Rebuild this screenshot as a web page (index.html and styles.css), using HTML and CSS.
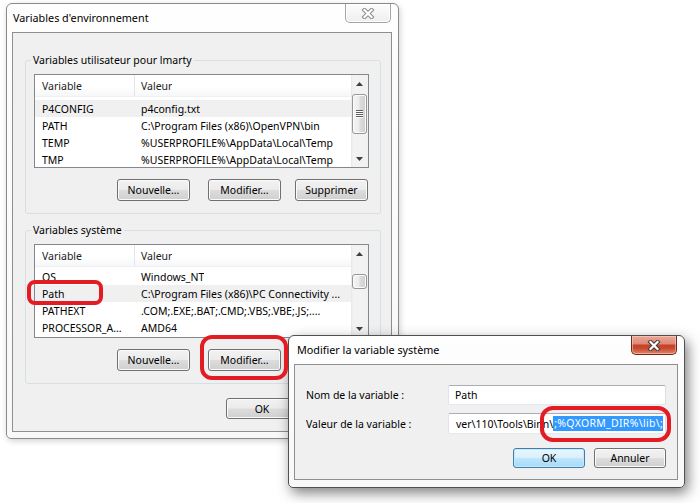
FILE: index.html
```html
<!DOCTYPE html>
<html lang="fr">
<head>
<meta charset="utf-8">
<title>Variables d'environnement</title>
<link rel="stylesheet" href="styles.css">
</head>
<body>
<div class="desktop">

  <section class="window main-window">
    <header class="titlebar">
      <span class="title">Variables d'environnement</span>
      <span class="close-btn inactive">
        <svg width="14" height="11" viewBox="0 0 14 11"><path class="x-out" d="M3.5 2 L10.5 9 M10.5 2 L3.5 9"/><path class="x-in" d="M3.5 2 L10.5 9 M10.5 2 L3.5 9"/></svg>
      </span>
    </header>
    <div class="client main-client">
      <fieldset class="group">
        <legend>Variables utilisateur pour lmarty</legend>
        <div class="group-body">
          <div class="listview">
            <div class="lv-main">
              <div class="lv-header"><span class="col-var">Variable</span><span class="col-val">Valeur</span></div>
              <div class="lv-rows">
                <div class="lv-row selected"><span class="col-var">P4CONFIG</span><span class="col-val">p4config.txt</span></div>
                <div class="lv-row"><span class="col-var">PATH</span><span class="col-val">C:\Program Files (x86)\OpenVPN\bin</span></div>
                <div class="lv-row"><span class="col-var">TEMP</span><span class="col-val">%USERPROFILE%\AppData\Local\Temp</span></div>
                <div class="lv-row"><span class="col-var">TMP</span><span class="col-val">%USERPROFILE%\AppData\Local\Temp</span></div>
              </div>
            </div>
            <div class="scrollbar">
              <span class="sb-arrow"><svg width="7" height="4" viewBox="0 0 7 4"><path d="M0 4 L3.5 0 L7 4 Z"/></svg></span>
              <span class="sb-track"><span class="sb-thumb grip" style="margin-top:2px;height:40px"></span></span>
              <span class="sb-arrow"><svg width="7" height="4" viewBox="0 0 7 4"><path d="M0 0 L7 0 L3.5 4 Z"/></svg></span>
            </div>
          </div>
          <div class="btn-row">
            <button class="btn">Nouvelle...</button>
            <button class="btn">Modifier...</button>
            <button class="btn">Supprimer</button>
          </div>
        </div>
      </fieldset>

      <fieldset class="group group-system">
        <legend>Variables système</legend>
        <div class="group-body">
          <div class="listview">
            <div class="lv-main">
              <div class="lv-header"><span class="col-var">Variable</span><span class="col-val">Valeur</span></div>
              <div class="lv-rows scrolled">
                <div class="lv-row"><span class="col-var">OS</span><span class="col-val">Windows_NT</span></div>
                <div class="lv-row selected"><span class="col-var">Path</span><span class="col-val">C:\Program Files (x86)\PC Connectivity ...</span></div>
                <div class="lv-row"><span class="col-var">PATHEXT</span><span class="col-val">.COM;.EXE;.BAT;.CMD;.VBS;.VBE;.JS;....</span></div>
                <div class="lv-row"><span class="col-var">PROCESSOR_A...</span><span class="col-val">AMD64</span></div>
              </div>
            </div>
            <div class="scrollbar">
              <span class="sb-arrow"><svg width="7" height="4" viewBox="0 0 7 4"><path d="M0 4 L3.5 0 L7 4 Z"/></svg></span>
              <span class="sb-track"><span class="sb-thumb" style="margin-top:12px;height:15px"></span></span>
              <span class="sb-arrow"><svg width="7" height="4" viewBox="0 0 7 4"><path d="M0 0 L7 0 L3.5 4 Z"/></svg></span>
            </div>
          </div>
          <div class="btn-row">
            <button class="btn">Nouvelle...</button>
            <button class="btn">Modifier...</button>
            <button class="btn occluded">Supprimer</button>
          </div>
        </div>
      </fieldset>

      <div class="footer">
        <button class="btn">OK</button>
        <button class="btn occluded">Annuler</button>
      </div>
    </div>
  </section>

  <section class="window dialog">
    <header class="titlebar">
      <span class="title">Modifier la variable système</span>
      <span class="close-btn active">
        <svg width="14" height="11" viewBox="0 0 14 11"><path class="x-out" d="M3.5 2 L10.5 9 M10.5 2 L3.5 9"/><path class="x-in" d="M3.5 2 L10.5 9 M10.5 2 L3.5 9"/></svg>
      </span>
    </header>
    <div class="client dialog-client">
      <div class="form">
        <span class="field-label">Nom de la variable :</span>
        <span class="textbox">Path</span>
        <span class="field-label">Valeur de la variable :</span>
        <span class="textbox tall scrolled-text"><span>ver\110\Tools\Binn\</span><span class="selection">;%QXORM_DIR%\lib\;</span></span>
      </div>
      <div class="dialog-buttons">
        <button class="btn btn-small default">OK</button>
        <button class="btn btn-small">Annuler</button>
      </div>
    </div>
  </section>

  <div class="ring ring-path"></div>
  <div class="ring ring-modify"></div>
  <div class="ring ring-value"></div>
</div>
</body>
</html>
```

FILE: styles.css
```css
* { box-sizing: border-box; }
html, body { margin: 0; padding: 0; background: #fff; }
body {
  font-family: "Noto Sans", "Open Sans", sans-serif;
  font-size: 10.5px;
  color: #000;
}
.desktop {
  position: relative;
  width: 700px;
  height: 503px;
  overflow: hidden;
  background: #fff;
}

/* windows */
.window {
  position: absolute;
  display: flex;
  flex-direction: column;
  border: 1px solid #8a8a8a;
  border-radius: 6px 6px 5px 5px;
  background: linear-gradient(#fefefe, #f8f8f8);
}
.main-window {
  left: 6px;
  top: 3px;
  width: 393px;
  height: 436px;
  padding: 0 6px 6px 5px;
  box-shadow: 1px 2px 6px rgba(0, 0, 0, .18);
}
.dialog {
  left: 288px;
  top: 335px;
  width: 397px;
  height: 153px;
  padding: 0 6px 7px 5px;
  border-color: #505050;
  box-shadow: 3px 5px 13px rgba(0, 0, 0, .5);
}
.titlebar {
  flex: none;
  height: 28px;
  display: flex;
  justify-content: space-between;
  align-items: flex-start;
}
.title {
  margin-top: 6px;
  margin-left: 1px;
  line-height: 16px;
  font-size: 10.8px;
}
.dialog .title { margin-left: 3px; }

.close-btn {
  width: 46px;
  height: 19px;
  margin-right: 1px;
  border: 1px solid #a3a3a3;
  border-top: none;
  border-radius: 0 0 5px 5px;
  display: flex;
  align-items: center;
  justify-content: center;
}
.close-btn svg { display: block; }
.x-out { fill: none; stroke-width: 4.2; stroke-linecap: square; }
.x-in { fill: none; stroke: #fff; stroke-width: 2.2; stroke-linecap: square; }
.close-btn.inactive {
  background: linear-gradient(#fdfdfd, #eeeeee);
  box-shadow: inset 0 0 0 1px #fff;
}
.close-btn.inactive .x-out { stroke: #8a8a8a; }
.close-btn.active {
  border-color: #6b2a1d;
  background: linear-gradient(#eba797 0%, #df8a78 42%, #c5432a 52%, #c9482d 68%, #e2866a 100%);
  box-shadow: inset 0 0 0 1px rgba(255, 220, 210, .5);
}
.close-btn.active .x-out { stroke: #3d3d3d; }

.client {
  flex: 1;
  min-height: 0;
  border: 1px solid #8e8f8f;
  background: #f0f0f0;
  display: flex;
  flex-direction: column;
}
.main-client { padding: 19px 10px 0 12px; }

/* group boxes */
.group {
  margin: 0;
  padding: 0;
  width: 356px;
  min-width: 0;
  border: 1px solid #d5dfe5;
  border-radius: 3px;
}
.group legend {
  margin-left: 5px;
  padding: 0 2px;
  line-height: 16px;
}
.group-system { margin-top: 8px; }
.group-body { padding: 6px 11px 12px 8px; }

/* list view */
.listview {
  display: flex;
  height: 94px;
  border: 1px solid #828790;
  background: #fff;
}
.lv-main {
  flex: 1;
  min-width: 0;
  display: flex;
  flex-direction: column;
}
.lv-header {
  flex: none;
  height: 22px;
  display: flex;
  align-items: stretch;
  background: linear-gradient(#fff 0%, #fff 55%, #f6f7f9 100%);
  border-bottom: 1px solid #eef0f2;
  color: #222;
}
.lv-header span { display: flex; align-items: center; }
.col-var {
  flex: none;
  width: 100px;
  padding-left: 7px;
  overflow: hidden;
  white-space: nowrap;
}
.lv-header .col-var { border-right: 1px solid #e3e5e8; }
.col-val {
  padding-left: 6px;
  white-space: nowrap;
  overflow: hidden;
}
.lv-rows {
  flex: 1;
  min-height: 0;
  overflow: hidden;
  padding-top: 3px;
}
.lv-rows.scrolled { padding-top: 1px; }
.lv-row {
  display: flex;
  align-items: center;
  height: 17px;
}
.lv-row.selected { background: #f0f0f0; }

/* scrollbar */
.scrollbar {
  flex: none;
  width: 17px;
  display: flex;
  flex-direction: column;
  background: linear-gradient(to right, #e6e6e6 0, #f3f3f3 2px, #f1f1f1 100%);
}
.sb-arrow {
  flex: none;
  height: 17px;
  display: flex;
  align-items: center;
  justify-content: center;
}
.sb-arrow svg { display: block; fill: #3f3f3f; }
.sb-track { flex: 1; display: flex; flex-direction: column; }
.sb-thumb {
  display: flex;
  align-items: center;
  justify-content: center;
  margin-left: 1px;
  width: 15px;
  border: 1px solid #979797;
  border-radius: 3px;
  background: linear-gradient(to right, #f4f4f4 0%, #ececec 45%, #dcdcdc 55%, #cfcfcf 100%);
  box-shadow: inset 0 0 0 1px #fbfbfb;
}
.sb-thumb.grip::after {
  content: "";
  width: 7px;
  height: 8px;
  background: repeating-linear-gradient(#5c5c5c 0 1px, #fdfdfd 1px 2px);
}

/* buttons */
.btn-row {
  display: flex;
  justify-content: flex-end;
  gap: 14px;
  margin-top: 11px;
  padding-right: 1px;
}
.btn-row .btn:first-child { margin-right: 4px; }
.btn {
  width: 73px;
  height: 22px;
  padding: 0;
  border: 1px solid #707070;
  border-radius: 3px;
  background: linear-gradient(#f2f2f2 0%, #ebebeb 49%, #dddddd 51%, #cfcfcf 100%);
  box-shadow: inset 0 0 0 1px #fbfbfb;
  font: inherit;
  color: #000;
}
.btn.occluded { visibility: hidden; }
.footer {
  display: flex;
  justify-content: flex-end;
  gap: 9px;
  margin-top: 14px;
  padding-right: 2px;
}
.footer .btn { width: 72px; height: 21px; }

/* dialog content */
.dialog-client { padding: 20px 11px 11px 11px; }
.form {
  display: grid;
  grid-template-columns: 142px 1fr;
  row-gap: 8px;
  align-items: center;
}
.textbox {
  height: 20px;
  display: flex;
  align-items: center;
  padding: 0 4px 0 6px;
  overflow: hidden;
  white-space: nowrap;
  background: #fff;
  border: 1px solid;
  border-color: #abadb3 #dbdfe6 #e3e9ef #e2e3ea;
  border-radius: 2px;
}
.textbox.tall { height: 21px; }
.scrolled-text { justify-content: flex-end; padding-right: 2px; }
.scrolled-text span { flex: none; }
.selection { background: #3399ff; color: #fff; line-height: 15px; padding-left: 1px; letter-spacing: 0.3px; }
.dialog-buttons {
  display: flex;
  justify-content: flex-end;
  gap: 9px;
  margin-top: 14px;
}
.btn-small { width: 72px; height: 20px; }
.btn.default {
  border-color: #3c7fb1;
  background: linear-gradient(#eaf6fd 0%, #d9f0fc 49%, #bee6fd 51%, #a7d9f5 100%);
  box-shadow: inset 0 0 0 1px #c8e8fa;
}

/* red annotations drawn over the screenshot */
.ring {
  position: absolute;
  border: 4px solid #e31b23;
  border-radius: 10px;
}
.ring-path { left: 27px; top: 280px; width: 76px; height: 25px; border-radius: 8px; }
.ring-modify { left: 200px; top: 335px; width: 88px; height: 45px; border-radius: 12px; }
.ring-value { left: 540px; top: 406px; width: 131px; height: 36px; border-radius: 13px; }
```
